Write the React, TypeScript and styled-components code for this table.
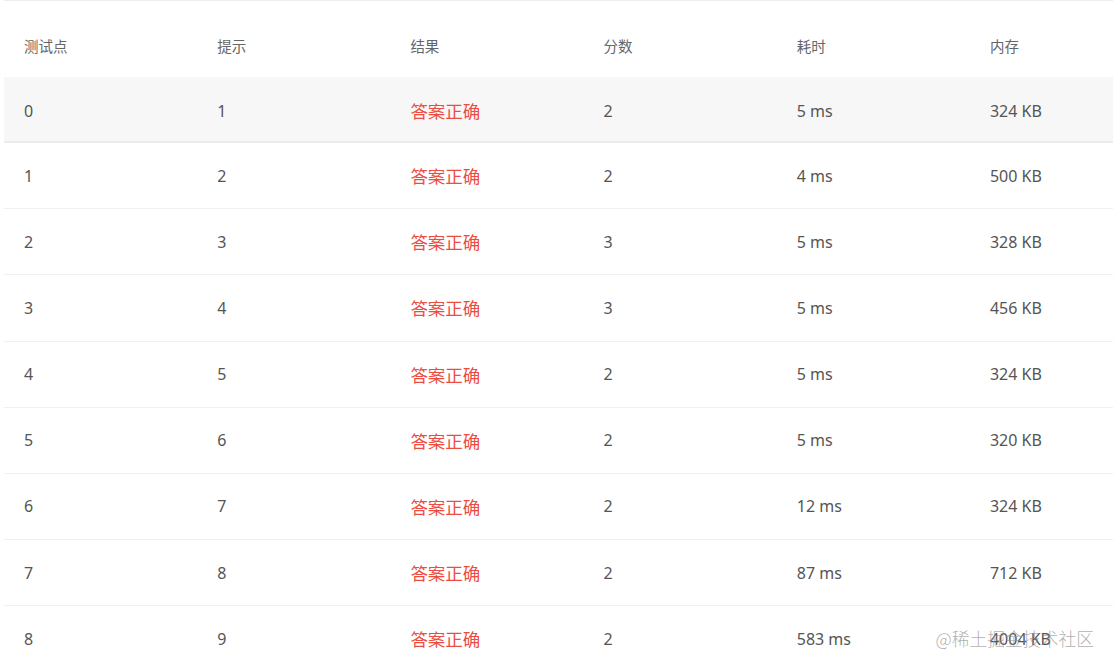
import styled, { createGlobalStyle } from 'styled-components';

const GlobalStyle = createGlobalStyle`
  html, body {
    margin: 0;
    padding: 0;
    background: #fff;
  }
  body {
    font-family: 'Noto Sans', 'Noto Sans CJK SC', sans-serif;
    overflow: hidden;
  }
`;

const Page = styled.div`
  position: relative;
  width: 1113px;
  height: 666px;
  overflow: hidden;
  padding-left: 4px;
  box-sizing: border-box;
`;

const Table = styled.div`
  width: 1160px;
  border-top: 1px solid #eeeeee;
`;

const HeaderRow = styled.div`
  display: grid;
  grid-template-columns: repeat(6, 193.2px);
  height: 76px;
  align-items: center;
  padding-top: 13px;
  box-sizing: border-box;
`;

const HeadCell = styled.div`
  padding-left: 20px;
  font-size: 14.5px;
  color: #666;
  font-family: 'Noto Sans CJK SC', sans-serif;
`;

const Row = styled.div<{ $active?: boolean }>`
  display: grid;
  grid-template-columns: repeat(6, 193.2px);
  height: 66.15px;
  align-items: center;
  box-sizing: border-box;
  padding-top: ${(p) => (p.$active ? '3px' : '0')};
  background: ${(p) => (p.$active ? '#f7f7f7' : '#fff')};
  border-bottom: ${(p) => (p.$active ? '2px solid #ececec' : '1px solid #f0f0f0')};
`;

const Cell = styled.div`
  padding-left: 20px;
  font-size: 16px;
  color: #555;
`;

const Result = styled(Cell)`
  font-family: 'Noto Sans CJK SC', sans-serif;
  font-size: 17.5px;
  color: #ec4d41;
`;

const Watermark = styled.div`
  position: absolute;
  right: 19px;
  bottom: 15px;
  font-family: 'Noto Sans CJK SC', sans-serif;
  font-size: 17.8px;
  font-weight: 300;
  color: rgba(140, 140, 140, 0.7);
  pointer-events: none;
`;

const rows = [
  ['0', '1', '2', '5 ms', '324 KB'],
  ['1', '2', '2', '4 ms', '500 KB'],
  ['2', '3', '3', '5 ms', '328 KB'],
  ['3', '4', '3', '5 ms', '456 KB'],
  ['4', '5', '2', '5 ms', '324 KB'],
  ['5', '6', '2', '5 ms', '320 KB'],
  ['6', '7', '2', '12 ms', '324 KB'],
  ['7', '8', '2', '87 ms', '712 KB'],
  ['8', '9', '2', '583 ms', '4004 KB'],
];

const headers = ['测试点', '提示', '结果', '分数', '耗时', '内存'];

export default function App() {
  return (
    <>
      <GlobalStyle />
      <Page>
        <Table>
          <HeaderRow>
            {headers.map((h) => (
              <HeadCell key={h}>{h}</HeadCell>
            ))}
          </HeaderRow>
          {rows.map((r, i) => (
            <Row key={r[0]} $active={i === 0}>
              <Cell>{r[0]}</Cell>
              <Cell>{r[1]}</Cell>
              <Result>答案正确</Result>
              <Cell>{r[2]}</Cell>
              <Cell>{r[3]}</Cell>
              <Cell>{r[4]}</Cell>
            </Row>
          ))}
        </Table>
        <Watermark>@稀土掘金技术社区</Watermark>
      </Page>
    </>
  );
}
